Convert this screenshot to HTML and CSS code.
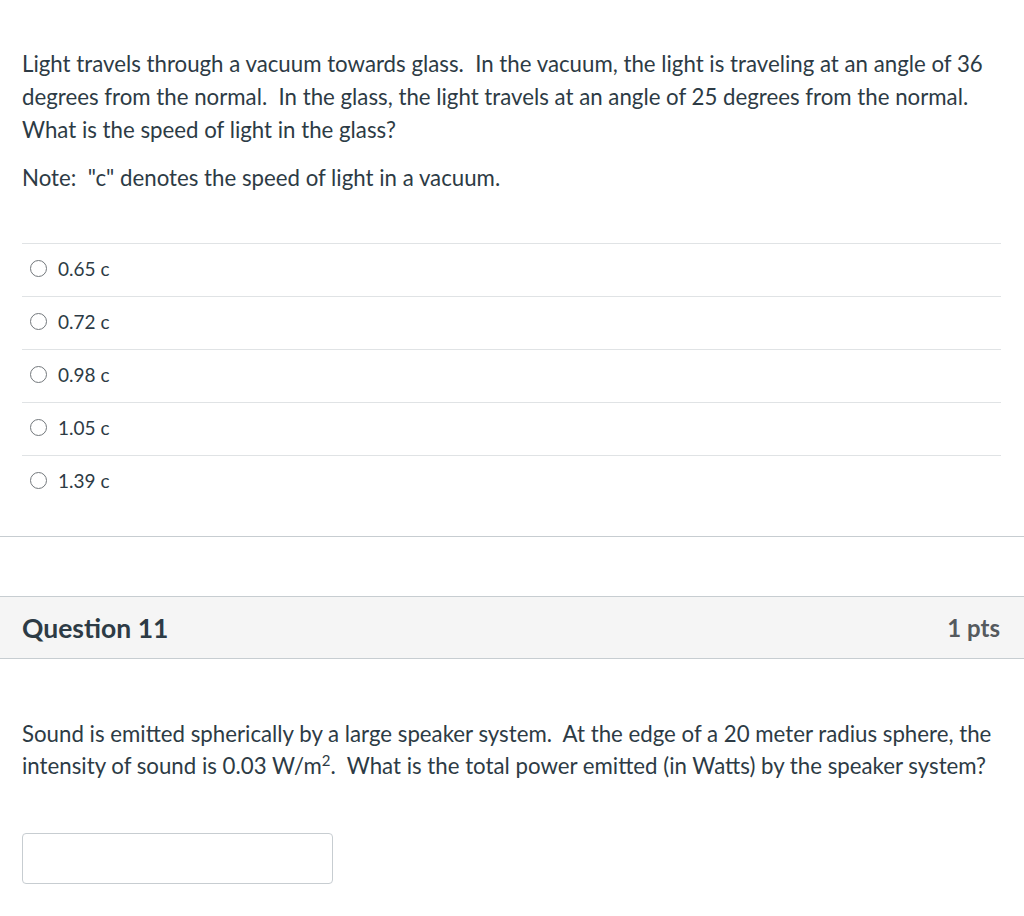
FILE: index.html
```html
<!DOCTYPE html>
<html>
<head>
<meta charset="utf-8">
<link rel="stylesheet" href="styles.css">
</head>
<body>
<div class="question">
  <div class="q-text">
    <p>Light travels through a vacuum towards glass.&nbsp; In the vacuum, the light is traveling at an angle of 36 degrees from the normal.&nbsp; In the glass, the light travels at an angle of 25 degrees from the normal.&nbsp; What is the speed of light in the glass?</p>
    <p>Note:&nbsp; "c" denotes the speed of light in a vacuum.</p>
  </div>
  <div class="answers">
    <div class="answer"><span class="radio"></span><span>0.65 c</span></div>
    <div class="answer"><span class="radio"></span><span>0.72 c</span></div>
    <div class="answer"><span class="radio"></span><span>0.98 c</span></div>
    <div class="answer"><span class="radio"></span><span>1.05 c</span></div>
    <div class="answer"><span class="radio"></span><span>1.39 c</span></div>
  </div>
</div>
<div class="question second">
  <div class="q-header">
    <h2 class="q-title">Question 11</h2>
    <span class="q-pts">1 pts</span>
  </div>
  <div class="q-text q2">
    <p>Sound is emitted spherically by a large speaker system.&nbsp; At the edge of a 20 meter radius sphere, the intensity of sound is 0.03 W/m<sup>2</sup>.&nbsp; What is the total power emitted (in Watts) by the speaker system?</p>
  </div>
  <div class="input-wrap"><input class="answer-input" type="text"></div>
</div>
</body>
</html>
```
FILE: styles.css
```css
html, body {
  margin: 0;
  padding: 0;
  background: #fff;
}
body {
  font-family: Lato, "Noto Sans", sans-serif;
  color: #2d3b45;
}
.question {
  border-bottom: 1px solid #c7cdd1;
}
.q-text {
  padding: 0 23px 0 22px;
  font-size: 22.25px;
  line-height: 33px;
}
.q-text p {
  margin: 0 0 15px 0;
}
.question > .q-text {
  padding-top: 47px;
}
.answers {
  margin: 49px 23px 0 22px;
  padding-bottom: 28px;
}
.answer {
  display: flex;
  align-items: center;
  height: 53px;
  border-top: 1px solid #e0e3e5;
  font-size: 19px;
  box-sizing: border-box;
  padding-left: 8px;
  padding-bottom: 4px;
}
.radio {
  width: 17px;
  height: 17px;
  border: 1.4px solid #73787c;
  border-radius: 50%;
  margin-right: 11px;
  box-sizing: border-box;
}
.second {
  margin-top: 59px;
  border-bottom: none;
}
.q-header {
  display: flex;
  justify-content: space-between;
  align-items: center;
  background: #f5f5f5;
  border-top: 1px solid #c7cdd1;
  border-bottom: 1px solid #c7cdd1;
  height: 63px;
  box-sizing: border-box;
  padding: 0 24px 0 22px;
}
.q-title {
  margin: 0;
  font-size: 26.5px;
  font-weight: 700;
  color: #2d3b45;
}
.q-pts {
  font-size: 24px;
  font-weight: 700;
  color: #555a5e;
}
.question > .q2 {
  padding-top: 59px;
}
.q2 p {
  margin: 0;
  line-height: 32px;
}
.q2 sup {
  font-size: 15px;
  line-height: 0;
}
.input-wrap {
  padding: 51px 22px 32px;
}
.answer-input {
  display: block;
  width: 311px;
  height: 51px;
  box-sizing: border-box;
  border: 1px solid #c7cdd1;
  border-radius: 4px;
  margin: 0;
  font-family: inherit;
}
```
